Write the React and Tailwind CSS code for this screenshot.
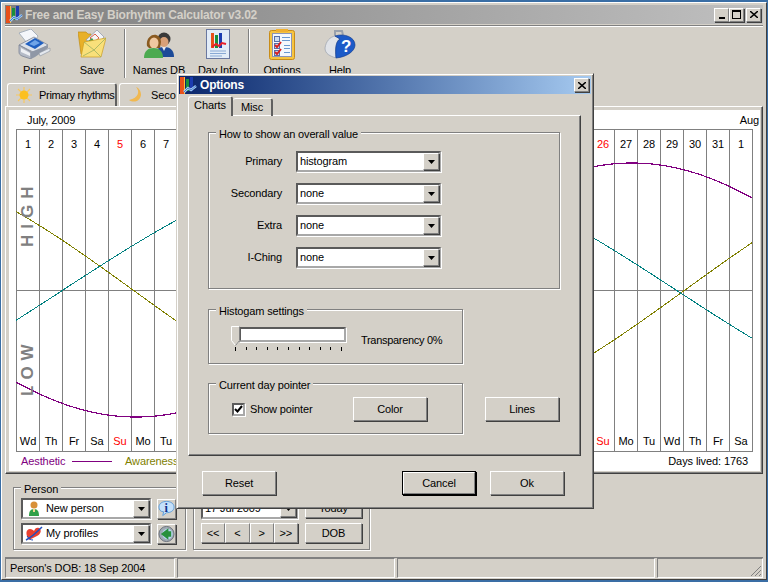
import React from 'react';

const raised = 'border border-t-white border-l-white border-r-[#808080] border-b-[#808080] shadow-[1px_1px_0_#404040]';
const sunken = 'border-2 border-t-[#5a5a5a] border-l-[#5a5a5a] border-r-[#a8a8a8] border-b-[#a8a8a8] shadow-[1px_1px_0_#fff]';
const etched = 'border border-[#808080] shadow-[1px_1px_0_#fff,inset_1px_1px_0_#fff]';

const weekdays = ['Su', 'Mo', 'Tu', 'Wd', 'Th', 'Fr', 'Sa'];
const days = Array.from({ length: 32 }, (_, i) => ({
  num: i === 31 ? 1 : i + 1,
  wd: weekdays[(i + 3) % 7],
  sunday: (i + 3) % 7 === 0,
}));

// curve fits in chart pixels (x from the page edge, y from the midline at 290)
const curve = (fn) => {
  const pts = [];
  for (let x = 16; x <= 752; x += 2) pts.push(`${x - 16},${(fn(x) - 129).toFixed(1)}`);
  return pts.join(' ');
};
const aesthetic = curve((x) => 290 + 127 * Math.cos((2 * Math.PI * (x - 136)) / 992));
const awareness = curve((x) => 290 + 127 * Math.sin((2 * Math.PI * (x - 133)) / 1104));
const intuition = curve((x) => 290 - 127 * Math.sin((2 * Math.PI * (x - 63)) / 1226));

function AppIcon() {
  return (
    <svg width="17" height="17" viewBox="0 0 17 17" className="shrink-0">
      <rect x="0" y="0" width="4" height="17" fill="#e8501a" />
      <rect x="4" y="0" width="1" height="17" fill="#f8c040" />
      <rect x="6" y="2" width="3" height="12" fill="#18903c" />
      <rect x="10" y="0" width="3" height="14" fill="#1c3cb0" />
      <path d="M4 15l4-4 3 2 5-4" stroke="#a8d0f4" strokeWidth="2.5" fill="none" />
      <path d="M4 15l4-4 3 2 5-4" stroke="#3068c0" strokeWidth="0.8" fill="none" />
    </svg>
  );
}

function Arrow() {
  return (
    <svg width="7" height="4" viewBox="0 0 7 4">
      <path d="M0 0h7L3.5 4z" fill="#000" />
    </svg>
  );
}

function PrintIcon() {
  return (
    <svg width="33" height="30" viewBox="0 0 33 30">
      <path d="M1 4l12-4 7 7-3 5-8 2z" fill="#f4f6fa" stroke="#98a4b4" strokeWidth="0.8" />
      <path d="M1 16l15-8 14 8-13 8z" fill="#dde2ea" stroke="#7c8494" strokeWidth="0.8" />
      <path d="M7 15l10-6 9 5-9 6z" fill="#1f5fc0" />
      <path d="M11 15l6-4 5 3-6 3z" fill="#6fa4e8" />
      <path d="M1 16v7c0 2 1 3 3 4l9 3V23z" fill="#b4bac6" stroke="#7c8494" strokeWidth="0.8" />
      <path d="M3 19l9 5v3l-9-4z" fill="#eef0f4" />
      <path d="M13 23l17-7v3l-13 9-4 2z" fill="#8f97a6" />
      <path d="M21 24l11-5v3l-10 5z" fill="#e4e8ee" stroke="#8a92a0" strokeWidth="0.6" />
    </svg>
  );
}

function SaveIcon() {
  return (
    <svg width="28" height="28" viewBox="0 0 28 28">
      <path d="M0 2h8l2 2h3v20H3z" fill="#e8b028" stroke="#c08e18" strokeWidth="0.7" />
      <path d="M8 10l11-10 7 7-7 8z" fill="#f2f4f8" stroke="#8a94a8" strokeWidth="0.7" />
      <path d="M12 8l5-4 4 4-5 4z" fill="#f4f4f4" stroke="#d85a48" strokeWidth="1" />
      <path d="M10 11l4-3 2 3z" fill="#3f9a48" />
      <path d="M3 27L6 12l22-4-5 19z" fill="#f9e07a" stroke="#cc9c20" strokeWidth="0.7" />
      <path d="M6 12l10 8 12-12M5 26l11-6 7 7" stroke="#9db060" strokeWidth="0.8" fill="none" />
    </svg>
  );
}

function NamesIcon() {
  return (
    <svg width="30" height="27" viewBox="0 0 30 27">
      <circle cx="20" cy="8" r="6.5" fill="#3a3a3a" />
      <ellipse cx="20" cy="11" rx="4.5" ry="5" fill="#d8a078" />
      <path d="M11 26c0-7 3-10 9-10s10 3 10 10z" fill="#1c4a98" />
      <path d="M18 16l2 4 2-4z" fill="#e8e8f0" />
      <path d="M3 15C1 3 16-1 17 11l-1 6H5z" fill="#8a5a20" />
      <ellipse cx="10" cy="12" rx="4.5" ry="5.5" fill="#f0c8a0" />
      <path d="M0 27c0-7 4-10 9.500-10S19 20 19 27z" fill="#4caa50" />
    </svg>
  );
}

function DayInfoIcon() {
  return (
    <svg width="24" height="30" viewBox="0 0 24 30">
      <rect x="0.5" y="0.5" width="23" height="29" fill="#e2ecf8" stroke="#6a78a0" />
      <rect x="5" y="4" width="3" height="15" fill="#e8501a" />
      <rect x="9" y="6" width="3" height="13" fill="#18903c" />
      <rect x="13" y="4" width="3" height="15" fill="#1c3cb0" />
      <path d="M6 18l4-3 3 2 3-3 4 1" stroke="#e8202a" strokeWidth="2" fill="none" />
      <path d="M4 22h16M4 24.500h16M4 27h12" stroke="#88a8d4" />
    </svg>
  );
}

function OptionsIcon() {
  return (
    <svg width="26" height="31" viewBox="0 0 26 31">
      <rect x="0.5" y="1.500" width="25" height="29" rx="2" fill="#f6c440" stroke="#c88c18" />
      <rect x="3.500" y="4.500" width="19" height="23" fill="#f4f8fc" stroke="#8a94b8" />
      <rect x="7" y="0" width="12" height="3" fill="#f0b030" />
      <rect x="5.500" y="7.500" width="5" height="5" fill="#cfdcf0" stroke="#5870a8" />
      <rect x="5.500" y="14.500" width="5" height="5" fill="#cfdcf0" stroke="#5870a8" />
      <rect x="5.500" y="21.500" width="5" height="5" fill="#cfdcf0" stroke="#5870a8" />
      <path d="M6 16l2 2 4-5M6 23l2 2 4-5" stroke="#d82020" strokeWidth="2" fill="none" />
      <path d="M13 8.500h8M13 11.500h8M15 16.500h6M15 19.500h6M15 23.500h6" stroke="#6898d0" />
    </svg>
  );
}

function HelpIcon() {
  return (
    <svg width="32" height="30" viewBox="0 0 32 30">
      <path d="M11 9V2h7l1 4" stroke="#98a0ac" strokeWidth="2" fill="none" />
      <path d="M1 19C2 12 6 8 11 7l5 3c-4 2-5 9-4 19C6 27 1 25 1 19z" fill="#e0e3e8" stroke="#9aa0ac" strokeWidth="0.7" />
      <path d="M11 7c9-3 20 1 20 9 0 6-8 12-19 13-1-10 0-17 4-19z" fill="#1c5ac8" stroke="#163f90" strokeWidth="0.7" />
      <text x="17" y="23" fontSize="17" fontWeight="700" fill="#fff" fontFamily="Liberation Sans, sans-serif">?</text>
    </svg>
  );
}

function SunIcon() {
  return (
    <svg width="16" height="16" viewBox="0 0 16 16" className="shrink-0">
      <path d="M8 0v16M0 8h16M2 2l12 12M14 2L2 14" stroke="#f8c860" strokeWidth="1.2" />
      <circle cx="8" cy="8" r="4.500" fill="#fcc020" />
    </svg>
  );
}

function MoonIcon() {
  return (
    <svg width="14" height="16" viewBox="0 0 14 16" className="shrink-0">
      <path d="M8 0c4 4 3 11-7 13 4 3 11 2 12-5C13 4 11 1 8 0z" fill="#f0b850" />
    </svg>
  );
}

function PersonIcon() {
  return (
    <svg width="14" height="16" viewBox="0 0 14 16" className="shrink-0">
      <circle cx="7" cy="4" r="3.500" fill="#d89038" />
      <path d="M2 15c0-4 1-7 5-7s5 3 5 7z" fill="#30a048" />
      <path d="M6 8h2v3H6z" fill="#f0d890" />
    </svg>
  );
}

function HeartIcon() {
  return (
    <svg width="18" height="16" viewBox="0 0 18 16" className="shrink-0">
      <path d="M4 14C0 8 1 3 5 3c2 0 3 1 4 2 1-3 3-4 5-3 3 2 2 6-2 8z" fill="#e84030" />
      <path d="M1 14C5 12 12 6 17 1" stroke="#2050c0" strokeWidth="1.500" fill="none" />
      <path d="M2 10c2 3 4 4 6 4" stroke="#2050c0" fill="none" />
    </svg>
  );
}

function InfoIcon() {
  return (
    <svg width="18" height="17" viewBox="0 0 18 17">
      <path d="M1 7c0-4 4-6 8-6s8 2 8 6-4 6-8 6l-4 3 1-4C3 12 1 10 1 7z" fill="#c4e0fa" stroke="#5a9ad8" />
      <text x="7" y="12" fontSize="13" fontWeight="700" fill="#10308a" fontFamily="Liberation Serif, serif">i</text>
    </svg>
  );
}

function GlobeIcon() {
  return (
    <svg width="18" height="18" viewBox="0 0 18 18">
      <circle cx="9" cy="9" r="8" fill="#a0aab4" stroke="#666c78" />
      <circle cx="10" cy="9" r="5.500" fill="#b8d8f0" />
      <path d="M11 3L3 9l8 6v-3h3V6h-3z" fill="#28903c" />
    </svg>
  );
}

function ToolButton({ label, icon }) {
  return (
    <div className="w-[58px] h-[55px] flex flex-col items-center">
      <div className="h-[34px] flex items-center justify-center">{icon}</div>
      <span className="mt-[2px] leading-[14px] whitespace-nowrap">{label}</span>
    </div>
  );
}

function Combo({ width, icon, text }) {
  return (
    <div className={`${sunken} h-[21px] bg-white flex items-center justify-between`} style={{ width }}>
      <div className="flex items-center pl-[2px] min-w-0 gap-[3px] whitespace-nowrap">
        {icon}
        <span>{text}</span>
      </div>
      <div className={`${raised} w-[16px] h-[17px] bg-[#d4d0c8] flex items-center justify-center shrink-0`}>
        <Arrow />
      </div>
    </div>
  );
}

function Btn({ label, className = '' }) {
  return (
    <div className={`${raised} bg-[#d4d0c8] flex items-center justify-center ${className}`}>{label}</div>
  );
}

function Group({ title, className = '', children }) {
  return (
    <div className={`${etched} relative ${className}`}>
      <span className="absolute left-[7px] top-[-5px] px-[3px] leading-[13px] bg-[#d4d0c8] whitespace-nowrap">{title}</span>
      {children}
    </div>
  );
}

function StatusCell({ className = '', children }) {
  return (
    <div className={`border border-t-[#808080] border-l-[#808080] border-r-white border-b-white h-[20px] flex items-center px-[4px] whitespace-nowrap ${className}`}>
      {children}
    </div>
  );
}

function Chart() {
  return (
    <div className="relative ml-[7px] w-[737px] h-[323px] flex border-t border-b border-r border-[#808080]">
      {days.map((d, i) => (
        <div key={i} className="w-[23px] border-l border-[#808080] flex flex-col justify-between items-center pt-[7px] pb-[3px]">
          <span className={`leading-[14px] ${d.sunday ? 'text-[#ff0000]' : ''}`}>{d.num}</span>
          <span className={`leading-[14px] ${d.sunday ? 'text-[#ff0000]' : ''}`}>{d.wd}</span>
        </div>
      ))}
      <svg width="737" height="323" className="absolute left-0 top-[-1px] pointer-events-none" shapeRendering="crispEdges">
        <line x1="0" y1="161.5" x2="737" y2="161.5" stroke="#808080" />
        <polyline points={aesthetic} fill="none" stroke="#800080" strokeWidth="1.2" />
        <polyline points={awareness} fill="none" stroke="#808000" />
        <polyline points={intuition} fill="none" stroke="#008080" />
      </svg>
      <span className="absolute left-[4px] top-[53px] h-[64px] [writing-mode:vertical-rl] rotate-180 text-[17px] leading-[16px] font-bold text-[#808080] tracking-[6px] text-center">HIGH</span>
      <span className="absolute left-[4px] top-[212px] h-[54px] [writing-mode:vertical-rl] rotate-180 text-[17px] leading-[16px] font-bold text-[#808080] tracking-[6px] text-center">LOW</span>
    </div>
  );
}

function MainWindow() {
  return (
    <div className="h-[578px] border border-t-white border-l-white border-r-[#404040] border-b-[#404040] pt-[2px] px-[3px] flex flex-col bg-[#d4d0c8]">
      <div className="h-[19px] shrink-0 flex items-center justify-between pl-[1px] pr-[2px] bg-gradient-to-r from-[#808080] to-[#c0c0c0]">
        <div className="flex items-center gap-[2px]">
          <AppIcon />
          <span className="font-bold text-[#d4d0c8] text-[12px] tracking-[-0.2px] whitespace-nowrap">Free and Easy Biorhythm Calculator v3.02</span>
        </div>
        <div className="flex">
          {['min', 'max'].map((k) => (
            <div key={k} className={`${raised} w-[15px] h-[14px] bg-[#d4d0c8] flex items-center justify-center`}>
              {k === 'min' ? <div className="w-[6px] h-[2px] bg-black mt-[7px]" /> : <div className="w-[9px] h-[9px] border border-black border-t-2" />}
            </div>
          ))}
          <div className={`${raised} w-[15px] h-[14px] ml-[2px] bg-[#d4d0c8] flex items-center justify-center`}>
            <svg width="8" height="7" viewBox="0 0 8 7"><path d="M0 0l8 7M8 0L0 7" stroke="#000" strokeWidth="1.5" /></svg>
          </div>
        </div>
      </div>
      <div className="h-[2px] shrink-0 mb-0 border-t border-[#808080] border-b border-b-white mt-[1px]" />

      <div className="h-[56px] shrink-0 flex items-start">
        <ToolButton label="Print" icon={<PrintIcon />} />
        <ToolButton label="Save" icon={<SaveIcon />} />
        <div className="w-[2px] h-[49px] mt-[2px] ml-[3px] mr-[4px] border-l border-[#808080] border-r border-r-white" />
        <ToolButton label="Names DB" icon={<NamesIcon />} />
        <div className="w-[1px]" />
        <ToolButton label="Day Info" icon={<DayInfoIcon />} />
        <div className="w-[2px] h-[49px] mt-[2px] ml-[1px] mr-[3px] border-l border-[#808080] border-r border-r-white" />
        <ToolButton label="Options" icon={<OptionsIcon />} />
        <ToolButton label="Help" icon={<HelpIcon />} />
      </div>

      <div className="h-[23px] shrink-0 flex pl-[2px] gap-[2px]">
        <div className="w-[110px] border-t border-l border-white border-r-2 border-r-[#606060] rounded-t-[3px] flex items-center pl-[8px] gap-[7px] whitespace-nowrap tracking-[-0.3px]">
          <SunIcon />
          <span>Primary rhythms</span>
        </div>
        <div className="w-[120px] border-t border-l border-white border-r-2 border-r-[#606060] rounded-t-[3px] flex items-center pl-[8px] gap-[9px] whitespace-nowrap">
          <MoonIcon />
          <span>Secondary rhythms</span>
        </div>
      </div>

      <div className="h-[368px] shrink-0 border border-t-white border-l-white border-r-[#404040] border-b-[#404040] pt-[3px] pl-[3px] pr-[2px] pb-[2px] shadow-[inset_-1px_-1px_0_#808080]">
        <div className="h-[361px] bg-white flex flex-col">
          <div className="h-[19px] flex justify-between items-center pl-[18px] pr-[1px] leading-[14px]">
            <span>July, 2009</span>
            <span>Aug</span>
          </div>
          <Chart />
          <div className="flex-1 flex items-center justify-between pl-[12px] pr-[12px]">
            <div className="flex items-center whitespace-nowrap">
              <span className="w-[51px] text-[#800080]">Aesthetic</span>
              <div className="w-[40px] h-[1px] bg-[#800080] mr-[13px]" />
              <span className="text-[#808000]">Awareness</span>
            </div>
            <span>Days lived: 1763</span>
          </div>
        </div>
      </div>

      <div className="flex ml-[8px] mt-[13px] gap-[7px]">
        <Group title="Person" className="w-[173px] h-[63px]">
          <div className="pl-[7px] pt-[10px] flex flex-col gap-[4px]">
            <div className="flex items-center gap-[6px]">
              <Combo width={130} icon={<span className="w-[18px] flex justify-center"><PersonIcon /></span>} text="New person" />
              <div className={`${raised} w-[19px] h-[20px] flex items-center justify-center`}><InfoIcon /></div>
            </div>
            <div className="flex items-center gap-[6px]">
              <Combo width={130} icon={<span className="w-[18px] flex justify-center"><HeartIcon /></span>} text="My profiles" />
              <div className={`${raised} w-[19px] h-[20px] flex items-center justify-center`}><GlobeIcon /></div>
            </div>
          </div>
        </Group>
        <Group title="Date" className="w-[177px] h-[63px]">
          <div className="pl-[7px] pt-[10px] flex flex-col gap-[4px]">
            <div className="flex gap-[7px]">
              <Combo width={97} text="17  Jul  2009" />
              <Btn label="Today" className="w-[57px] h-[20px]" />
            </div>
            <div className="flex gap-[7px]">
              <div className="flex w-[97px]">
                {['<<', '<', '>', '>>'].map((s) => (
                  <Btn key={s} label={s} className="flex-1 h-[20px]" />
                ))}
              </div>
              <Btn label="DOB" className="w-[57px] h-[20px]" />
            </div>
          </div>
        </Group>
      </div>

      <div className="mt-[7px] flex gap-[2px] border-t border-[#808080] pt-0">
        <StatusCell className="w-[170px]">Person's DOB: 18 Sep 2004</StatusCell>
        <StatusCell className="w-[218px]" />
        <StatusCell className="w-[258px]" />
        <StatusCell className="flex-1 relative">
          <svg width="12" height="12" viewBox="0 0 12 12" className="absolute right-0 bottom-0">
            <path d="M11 1L1 11M11 5l-6 6M11 9l-2 2" stroke="#808080" />
          </svg>
        </StatusCell>
      </div>
    </div>
  );
}

function OptionsDialog() {
  const rows = [
    ['Primary', 'histogram'],
    ['Secondary', 'none'],
    ['Extra', 'none'],
    ['I-Ching', 'none'],
  ];
  return (
    <div className="absolute left-[176px] top-[73px] w-[418px] h-[436px] bg-[#d4d0c8] border border-t-[#d4d0c8] border-l-[#d4d0c8] border-r-[#404040] border-b-[#404040] shadow-[inset_1px_1px_0_#fff,inset_-1px_-1px_0_#808080] pt-[2px] px-[2px]">
      <div className="h-[18px] flex items-center justify-between pl-[1px] pr-[2px] bg-gradient-to-r from-[#0a246a] to-[#a6caf0]">
        <div className="flex items-center gap-[3px]">
          <AppIcon />
          <span className="font-bold text-white text-[12px] tracking-[-0.2px]">Options</span>
        </div>
        <div className={`${raised} w-[15px] h-[14px] bg-[#d4d0c8] flex items-center justify-center`}>
          <svg width="8" height="7" viewBox="0 0 8 7"><path d="M0 0l8 7M8 0L0 7" stroke="#000" strokeWidth="1.5" /></svg>
        </div>
      </div>

      <div className="h-[21px] flex pl-[9px]">
        <div className="w-[45px] h-[20px] mt-[2px] pb-[2px] border-t border-l border-white border-r-2 border-r-[#606060] rounded-t-[3px] flex items-center justify-center bg-[#d4d0c8]">Charts</div>
        <div className="w-[40px] h-[18px] mt-[4px] border-t border-white border-r-2 border-r-[#606060] rounded-t-[3px] flex items-center justify-center">Misc</div>
      </div>

      <div className="ml-[9px] w-[393px] h-[341px] border border-t-white border-l-white border-r-[#404040] border-b-[#404040] shadow-[inset_-1px_-1px_0_#808080] pt-[16px] pl-[19px] tracking-[-0.15px]">
        <Group title="How to show an overall value" className="w-[352px] h-[157px]">
          <div className="pt-[18px] flex flex-col gap-[11px]">
            {rows.map(([label, val]) => (
              <div key={label} className="flex items-center">
                <span className="w-[73px] text-right mr-[14px]">{label}</span>
                <Combo width={145} text={val} />
              </div>
            ))}
          </div>
        </Group>

        <Group title="Histogam settings" className="w-[255px] h-[55px] mt-[20px]">
          <div className="relative pl-[30px] pt-[17px] flex items-start">
            <div className={`${sunken} w-[107px] h-[15px] bg-white`} />
            <span className="ml-[15px] mt-[5px] whitespace-nowrap tracking-[-0.3px]">Transparency 0%</span>
            <svg width="10" height="20" viewBox="0 0 10 20" className="absolute left-[22px] top-[16px]">
              <path d="M0.5 0.5h8v14l-4 5-4-5z" fill="#d4d0c8" stroke="#fff" />
              <path d="M8.500 0.5v14l-4 5" fill="none" stroke="#808080" />
            </svg>
            <div className="absolute left-[26px] top-[37px] w-[107px] flex justify-between">
              {Array.from({ length: 11 }, (_, i) => (
                <div key={i} className={`w-[1px] bg-black ${i === 0 || i === 10 ? 'h-[4px]' : 'h-[3px]'}`} />
              ))}
            </div>
          </div>
        </Group>

        <div className="flex mt-[19px]">
          <Group title="Current day pointer" className="w-[255px] h-[51px]">
            <div className="pl-[23px] pt-[13px] flex items-center">
              <div className={`${sunken} w-[13px] h-[13px] bg-white flex items-center justify-center`}>
                <svg width="9" height="8" viewBox="0 0 9 8"><path d="M1 4l2.500 2.500L8 1" stroke="#000" strokeWidth="2" fill="none" /></svg>
              </div>
              <span className="ml-[5px] w-[103px] whitespace-nowrap">Show pointer</span>
              <Btn label="Color" className="w-[74px] h-[24px]" />
            </div>
          </Group>
          <Btn label="Lines" className="w-[74px] h-[24px] ml-[22px] mt-[14px]" />
        </div>
      </div>

      <div className="flex ml-[23px] mt-[15px]">
        <Btn label="Reset" className="w-[74px] h-[24px]" />
        <div className="ml-[126px] w-[74px] h-[24px] border border-black shadow-[1px_1px_0_#000] flex">
          <Btn label="Cancel" className="w-full h-full shadow-none" />
        </div>
        <Btn label="Ok" className="w-[74px] h-[24px] ml-[14px]" />
      </div>
    </div>
  );
}

export default function App() {
  return (
    <div className="relative w-[768px] h-[582px] overflow-hidden bg-[#3a6ea5] pt-[2px] pl-[1px] pr-[1px] font-['Liberation_Sans',sans-serif] text-[11px] tracking-[-0.1px] text-black">
      <MainWindow />
      <OptionsDialog />
    </div>
  );
}
